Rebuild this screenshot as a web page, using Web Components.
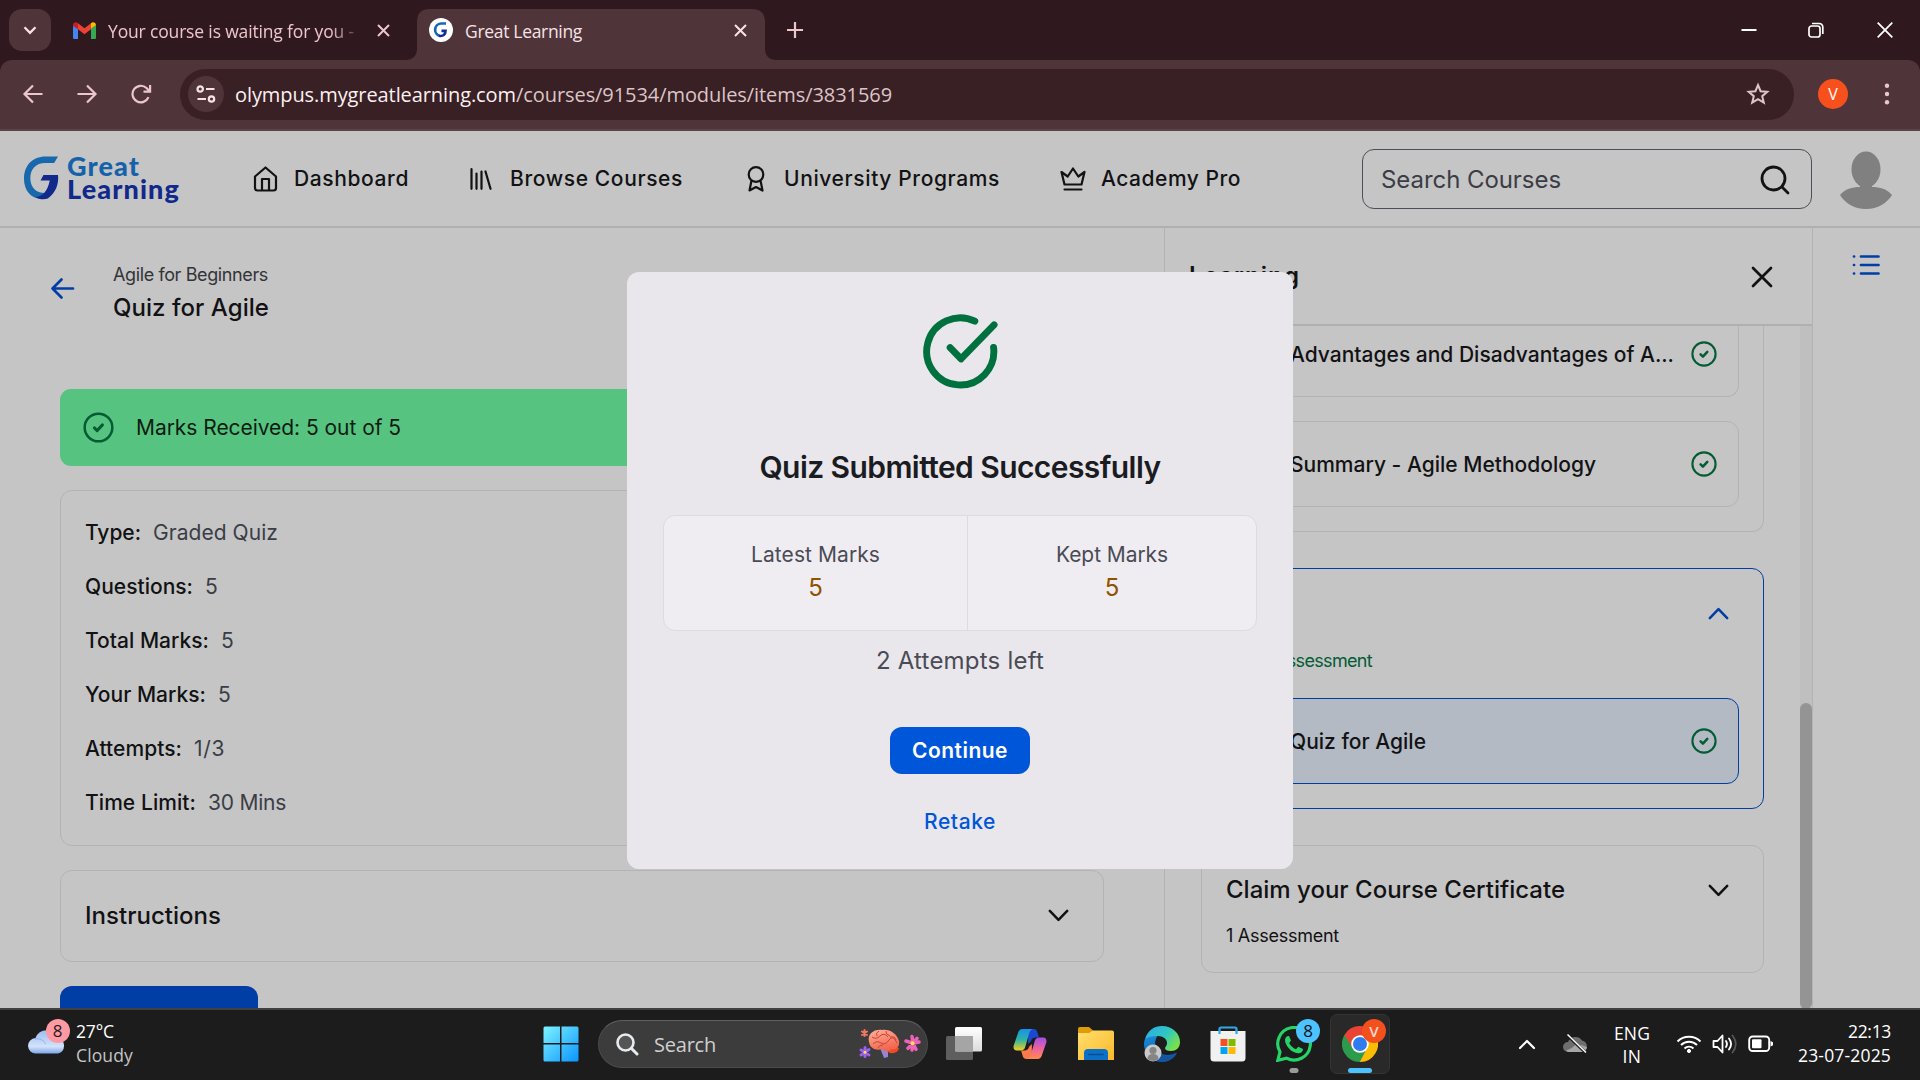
<!DOCTYPE html>
<html lang="en">
<head>
<meta charset="utf-8">
<title>Great Learning</title>
<style>
html,body{margin:0;padding:0}
body{width:1920px;height:1080px;overflow:hidden;display:flex;flex-direction:column;background:#c5c5c5;font-family:Inter,"Liberation Sans",sans-serif;color:#121214}
</style>
</head>
<body>
<browser-chrome></browser-chrome>
<course-page></course-page>
<task-bar></task-bar>
<script>
const define = (name, css, html, after) => {
  const tpl = document.createElement('template');
  tpl.innerHTML = `<style>*{box-sizing:border-box}svg{display:block;flex:none}${css}</style>${html}`;
  customElements.define(name, class extends HTMLElement {
    constructor(){ super(); this.attachShadow({mode:'open'}).append(tpl.content.cloneNode(true)); }
    connectedCallback(){ if (after) after(this, this.shadowRoot); }
  });
};

/* Text set to an exact advance width: the rest is spread over the letters. */
define('fit-text', `:host{display:inline-block;flex:none;white-space:nowrap}span{display:inline-block}`, `<span><slot></slot></span>`, (el, root) => {
  const w = +el.getAttribute('w'), s = root.querySelector('span');
  const n = el.textContent.length;
  s.style.letterSpacing = '0px';
  const nat = s.getBoundingClientRect().width;
  s.style.letterSpacing = ((w - nat) / n).toFixed(3) + 'px';
  el.style.width = w + 'px';
});

define('check-badge', `:host{display:block;flex:none;width:var(--s,26px);height:var(--s,26px);color:#045c35}svg{width:100%;height:100%}`,
`<svg viewBox="0 0 26 26" fill="none" stroke="currentColor" stroke-width="2.1" stroke-linecap="round" stroke-linejoin="round"><circle cx="13" cy="13" r="11.6"/><path d="M9.600 13.300l2.300 2.300 4.400-4.800" stroke-width="2.500"/></svg>`);

define('chevron-icon', `:host{display:block;flex:none;width:21px;height:13px}:host([up]){transform:scaleY(-1)}`,
`<svg width="21" height="13" viewBox="0 0 21 13" fill="none" stroke="currentColor" stroke-width="2.5" stroke-linecap="round" stroke-linejoin="round"><path d="M1.800 1.800l8.700 9 8.700-9"/></svg>`);

define('browser-chrome', `
:host{display:block;flex:none;height:131px;background:#2f181e;font-family:"Open Sans","Noto Sans",sans-serif;color:#ecc6cd}
.tabs{height:60px;display:flex;align-items:center;font-size:17.5px}
.drop{width:42px;height:42px;border-radius:13px;background:#4f3439;margin-left:9px;display:grid;place-items:center}
.t1{display:flex;align-items:center;width:354px;padding-left:22px}
.t1 fit-text{margin-left:12px;padding-top:2px;-webkit-mask-image:linear-gradient(90deg,#000 90%,transparent 104%)}
.t1 .x{margin-left:23px}
.act{width:372px;height:51px;align-self:flex-end;display:grid;color:#f7e3e6}
.act>*{grid-area:1/1}
.act .row{display:flex;align-items:center;padding:0 30px 9px 24px;}
.act fit-text{margin-left:12px;padding-top:2px}.act .x{margin-left:auto}
.plus{margin-left:10px}
.win{margin-left:auto;display:flex;align-items:center;padding-right:27px;color:#fff;height:58px}
.bar{height:71px;background:#4f3439;border-bottom:2px solid #5b4447;border-radius:12px 12px 0 0;display:flex;align-items:center;padding:0 0 1px 22px;}
.omni{margin-left:26px;width:1614px;height:51px;border-radius:26px;background:#382024;display:flex;align-items:center;padding:0 24px 0 8px;font-size:20px;color:#ddc4c7}
.info{width:36px;height:36px;border-radius:50%;background:#4f3439;display:grid;place-items:center;margin-right:11px}
.omni b{font-weight:400;color:#fdf0f1}
.omni svg.star{margin-left:auto}
.av{width:30px;height:30px;border-radius:50%;background:#f8501d;color:#fff;font-size:16px;display:grid;place-items:center;margin-left:24px}
.dots{margin-left:36px}
`, `
<div class="tabs">
 <div class="drop"><svg width="14" height="9" viewBox="0 0 14 9" fill="none" stroke="#f7e3e6" stroke-width="2.3"><path d="M1.5 1.3L7 6.8l5.5-5.500"/></svg></div>
 <div class="t1">
  <svg width="23" height="17" viewBox="0 0 23 17"><path d="M0 3v13a1 1 0 001 1h4V6z" fill="#4285f4"/><path d="M23 3v13a1 1 0 01-1 1h-4V6z" fill="#34a853"/><path d="M18 1l-.5 5.800L23 3.200C23 .4 20.100-.8 18 1z" fill="#fbbc04"/><path d="M5 1.300l6.500 5L18 1.300v6l-6.500 5L5 7.300z" fill="#ea4335"/><path d="M0 3.200C0 .4 2.900-.8 5 1.300v6L0 4z" fill="#c5221f"/></svg>
  <fit-text w="246">Your course is waiting for you -</fit-text>
  <svg class="x" width="13" height="13" viewBox="0 0 13 13" stroke="currentColor" stroke-width="2"><path d="M1 1l11 11M12 1L1 12"/></svg>
 </div>
 <div class="act">
  <svg width="372" height="51"><path d="M0 51Q12 51 12 39V13Q12 0 25 0H347Q360 0 360 13V39Q360 51 372 51Z" fill="#4f3439"/></svg>
  <div class="row">
   <svg width="24" height="24" viewBox="0 0 24 24"><circle cx="12" cy="12" r="12" fill="#fff"/><path d="M17 5.500h-4.500a6.300 6.300 0 00-2 12.300" fill="none" stroke="#1766b4" stroke-width="2.700"/><path d="M10 17.800c4.500 1 6.500-1.800 6.500-5h-4" fill="none" stroke="#102f96" stroke-width="2.700"/></svg>
   <fit-text w="117">Great Learning</fit-text>
   <svg class="x" width="13" height="13" viewBox="0 0 13 13" stroke="currentColor" stroke-width="2"><path d="M1 1l11 11M12 1L1 12"/></svg>
  </div>
 </div>
 <svg class="plus" width="16" height="16" viewBox="0 0 16 16" stroke="currentColor" stroke-width="2.200"><path d="M8 0v16M0 8h16"/></svg>
 <div class="win">
  <svg width="16" height="16" viewBox="0 0 16 16" stroke="#fff" stroke-width="2"><path d="M0.500 8h15"/></svg>
  <svg style="margin-left:51px" width="16" height="16" viewBox="0 0 16 16" fill="none" stroke="#fff" stroke-width="1.700"><rect x="1" y="4" width="11" height="11" rx="2.500"/><path d="M4 1.500h7A3.600 3.600 0 0114.800 5v7"/></svg>
  <svg style="margin-left:53px" width="16" height="16" viewBox="0 0 16 16" stroke="#fff" stroke-width="1.800"><path d="M.7.700l14.600 14.600M15.300.7L.7 15.300"/></svg>
 </div>
</div>
<div class="bar">
 <svg width="132" height="20" viewBox="0 0 132 20" fill="none" stroke="#ecc6cd" stroke-width="2.200"><path d="M20.500 10H2.500M11 1.500L2.500 10l8.500 8.500"/><path d="M55.500 10h18M65 1.500L73.500 10l-8.500 8.500"/><path d="M126.500 13.200A8.300 8.300 0 11124.500 4l3 3M128.100 1v6.600H121.500"/></svg>
 <div class="omni">
  <div class="info"><svg width="20" height="18" viewBox="0 0 20 18" fill="none" stroke="#f7e3e6" stroke-width="2.200"><circle cx="4.200" cy="4" r="2.700"/><path d="M10 4h8.500M1.500 14H10"/><circle cx="15.500" cy="14" r="2.700"/></svg></div>
  <b><fit-text w="281">olympus.mygreatlearning.com</fit-text></b><fit-text w="376">/courses/91534/modules/items/3831569</fit-text>
  <svg class="star" width="24" height="24" viewBox="0 0 24 24" fill="none" stroke="#dcc5c8" stroke-width="2"><path d="M12 3l2.600 6.200 6.700.6-5.100 4.400 1.600 6.500L12 17.200l-5.800 3.500 1.600-6.500-5.100-4.400 6.700-.6z"/></svg>
 </div>
 <div class="av">V</div>
 <svg class="dots" width="6" height="22" viewBox="0 0 6 22" fill="#ecc6cd"><circle cx="3" cy="2.700" r="2.200"/><circle cx="3" cy="11" r="2.200"/><circle cx="3" cy="19.300" r="2.200"/></svg>
</div>`);

define('site-header', `
:host{display:flex;flex:none;align-items:center;height:97px;border-bottom:2px solid #b0b0b0;padding-left:24px;font-size:21px;font-weight:500}
.logo{display:flex;width:159px;margin-top:3px}
.logo div{font:900 27px/23px Lato,sans-serif;padding:0 0 0 8px;margin-top:-2px;display:flex;flex-direction:column}
.l{color:#10298a;padding-bottom:5px}
.great{color:#1562ab}
.search{width:450px;height:60px;border:1.500px solid #4d4e57;border-radius:12px;display:flex;align-items:center;justify-content:space-between;padding:0 21px 0 18px;font-size:24px;font-weight:400;color:#3b3d46}
.search fit-text{padding-top:2px}.search svg{margin-top:2px}
`, `
<div class="logo">
 <svg width="35" height="44" viewBox="0 0 36 44"><path d="M35 0l-4 6.500h-9C12 6.500 6.500 13 6.500 22c0 7.500 4 13.500 10.500 15l7.500 1-2.500 4.800C9 45.500 0 36 0 23 0 9 9 0 22 0z" fill="#1768ad"/><path d="M20 19h15c1 9-2.500 19-10.500 24-4 1.500-9 1-13-1.500 7-.5 12.500-5 15-17h-9.500z" fill="#10298a"/></svg>
 <div><fit-text class="great" w="73">Great</fit-text><fit-text class="l" w="113">Learning</fit-text></div>
</div>
<svg style="margin-left:70px" width="25" height="26" viewBox="0 0 25 26" fill="none" stroke="#121214" stroke-width="2.200" stroke-linejoin="round"><path d="M2 10.500L12.500 1.500 23 10.500V22a2.500 2.500 0 01-2.500 2.500h-16A2.500 2.500 0 012 22z"/><path d="M9 24.500V13h7v11.500"/></svg>
<fit-text class="nav" style="margin-left:16px" w="115">Dashboard</fit-text>
<svg style="margin-left:61px" width="22" height="22" viewBox="0 0 22 22" stroke="#121214" stroke-width="2.200" stroke-linecap="round"><path d="M1.500 1.200v19.600M6.500 5.500v15.300M11.500 3.500v17.300M15.500 3.500l5 17.300"/></svg>
<fit-text class="nav" style="margin-left:18px" w="173">Browse Courses</fit-text>
<svg style="margin-left:64px" width="18" height="26" viewBox="0 0 18 26" fill="none" stroke="#121214" stroke-width="2.200" stroke-linejoin="round"><circle cx="9" cy="8.500" r="7.300"/><path d="M4.500 14.500L2.500 24.500l6.500-3.500 6.500 3.500-2-10"/></svg>
<fit-text class="nav" style="margin-left:19px" w="216">University Programs</fit-text>
<svg style="margin-left:60px" width="26" height="24" viewBox="0 0 26 24" fill="none" stroke="#121214" stroke-width="2.200" stroke-linejoin="round" stroke-linecap="round"><path d="M4.500 17.500L1.500 5l6.200 4.500L13 1.500l5.300 8L24.500 5l-3 12.500zM4.500 22.500h17"/></svg>
<fit-text class="nav" style="margin-left:15px" w="140">Academy Pro</fit-text>
<div class="search" style="margin-left:121px"><fit-text w="180">Search Courses</fit-text>
 <svg width="30" height="30" viewBox="0 0 30 30" fill="none" stroke="#121214" stroke-width="2.800" stroke-linecap="round"><circle cx="13.500" cy="13.500" r="11.500"/><path d="M22 22l6 6"/></svg></div>
<svg style="margin-left:28px;margin-top:3px" width="52" height="58" viewBox="0 0 52 58" fill="#808080"><ellipse cx="26" cy="18.500" rx="14.500" ry="18"/><path d="M20 32h12v4c8 0 15 2 20 8-5 8-14 14-26 14S5 52 0 44c5-6 12-8 20-8z"/></svg>`);

define('info-row', `:host{display:flex;height:54px;align-items:center;font-size:21px;font-weight:500}::slotted(.v){font-weight:400;color:#3b3d46;margin-left:12px}`, `<slot></slot>`);

define('quiz-main', `
:host{display:block;width:1164px;padding:0 60px;height:782px;overflow:hidden}
.head{display:flex;height:161px;align-items:flex-start}
.head svg{margin:49px 0 0 -10px}
.head div{display:flex;flex-direction:column;margin:33px 0 0 38px;font-size:18px;line-height:28px;color:#333438}
.head .t{font-size:24px;line-height:38px;font-weight:500;color:#121214}
.ok{height:77px;border-radius:11px;background:#57c380;display:flex;align-items:center;padding-left:23px;font-size:21px;color:#0b1c12}
.ok fit-text{margin-left:22px}
.card{border:1.500px solid #b3b3b3;border-radius:12px;width:1044px}
.det{margin-top:24px;height:356px;padding:14px 0 0 24px}
.ins{margin-top:11px;height:92px;display:flex;align-items:center;justify-content:space-between;padding:0 34px 1px 24px;font-size:24px;font-weight:500}
.btn{margin-top:24px;width:198px;height:60px;border-radius:12px;background:#003da5}
`, `
<div class="head"><svg width="25" height="23" viewBox="0 0 25 23" fill="none" stroke="#003da5" stroke-width="2.700" stroke-linecap="round" stroke-linejoin="round"><path d="M23 11.500H2.500M11.500 2.500L2.500 11.500 11.500 20.500"/></svg>
<div><fit-text w="155">Agile for Beginners</fit-text><fit-text class="t" w="156">Quiz for Agile</fit-text></div></div>
<div class="ok"><check-badge style="--s:31px"></check-badge><fit-text w="265">Marks Received: 5 out of 5</fit-text></div>
<div class="card det">
<info-row><fit-text w="56">Type:</fit-text><fit-text class="v" w="125">Graded Quiz</fit-text></info-row>
<info-row><fit-text w="108">Questions:</fit-text><fit-text class="v" w="13">5</fit-text></info-row>
<info-row><fit-text w="124">Total Marks:</fit-text><fit-text class="v" w="13">5</fit-text></info-row>
<info-row><fit-text w="121">Your Marks:</fit-text><fit-text class="v" w="13">5</fit-text></info-row>
<info-row><fit-text w="97">Attempts:</fit-text><fit-text class="v" w="31">1/3</fit-text></info-row>
<info-row><fit-text w="111">Time Limit:</fit-text><fit-text class="v" w="78">30 Mins</fit-text></info-row>
</div>
<div class="card ins" style="margin-top:24px"><fit-text w="136">Instructions</fit-text><chevron-icon></chevron-icon></div>
<div class="btn"></div>`);

define('lesson-item', `:host{display:flex;align-items:center;height:86px;border:1.500px solid #b3b3b3;border-radius:12px;margin:0 24px;padding:0 21.500px 0 63px;font-size:21px;font-weight:500;justify-content:space-between}
:host([active]){background:#b3bac3;border-color:#003da5}:host([cut]){height:71px;border-top:0;border-radius:0 0 12px 12px;padding-bottom:14px}`, `<slot></slot><check-badge></check-badge>`);

define('learning-panel', `
:host{display:flex;flex-direction:column;width:649px;height:782px;border-left:1.500px solid #b3b3b3;border-right:1.500px solid #b3b3b3;overflow:hidden}
.head{flex:none;height:98px;border-bottom:2px solid #b0b0b0;display:flex;align-items:center;justify-content:space-between;padding:2px 39px 0 24px;font-size:24px;font-weight:600}
.head fit-text{margin-bottom:3px}
.body{display:flex;flex:1}
.list{width:635px;padding-left:36px;display:flex;flex-direction:column}
.card{width:563px;border:1.500px solid #b3b3b3;border-radius:12px;flex:none}
.c1{border-top:0;border-radius:0 0 12px 12px;height:206px}
.c1 lesson-item+lesson-item{margin-top:24px}
.c2{margin-top:36px;height:241px;border-color:#003da5;display:flex;flex-direction:column}
.c2 .top{height:129px;padding:0 34px 0 73px;font-size:18px;color:#045c35;display:flex;align-items:flex-start}
.c2 .top fit-text{margin-top:81px}
.c2 chevron-icon{color:#003da5;margin:38px 0 0 auto}
.c3{margin-top:36px;height:128px;padding:25px 34px 0 24px;font-size:24px;font-weight:500;line-height:38px}
.c3 div{display:flex;align-items:center;justify-content:space-between}
.c3 .s{font-size:18px;line-height:26px;font-weight:400;margin-top:14px;display:block}
.track{width:12px;background:#bfbfbf;display:flex;flex-direction:column;justify-content:flex-end;padding-bottom:1px}
.thumb{height:306px;border-radius:6px;background:#949494}
`, `
<div class="head"><fit-text w="111">Learning</fit-text><svg width="22" height="22" viewBox="0 0 22 22" stroke="#121214" stroke-width="2.700" stroke-linecap="round"><path d="M2 2l18 18M20 2L2 20"/></svg></div>
<div class="body"><div class="list">
 <div class="card c1"><lesson-item cut><fit-text w="384">Advantages and Disadvantages of A...</fit-text></lesson-item><lesson-item><fit-text w="306">Summary - Agile Methodology</fit-text></lesson-item></div>
 <div class="card c2"><div class="top"><fit-text w="97">Assessment</fit-text><chevron-icon up></chevron-icon></div><lesson-item active><fit-text w="136">Quiz for Agile</fit-text></lesson-item></div>
 <div class="card c3"><div><fit-text w="339">Claim your Course Certificate</fit-text><chevron-icon></chevron-icon></div><fit-text class="s" w="113">1 Assessment</fit-text></div>
</div><div class="track"><div class="thumb"></div></div></div>`);

define('quiz-dialog', `
:host{width:666px;height:597px;border-radius:12px;background:#e9e7ec;display:flex;flex-direction:column;align-items:center;color:#4a4b55;font-size:21px}
.ico{margin:41px 0 0 1px}
h2{margin:57px 0 0;font-size:30px;line-height:40px;font-weight:600;color:#1b1c22}
.box{margin-top:28px;width:594px;height:116px;border:1.500px solid #dcdbe0;border-radius:12px;background:#f0edf2;display:flex}
.box div{display:flex;flex-direction:column;align-items:center;padding-top:26px;line-height:26px;width:288px}
.box div:first-child{border-right:1.500px solid #dcdbe0;width:304px}
.n{font-size:24px;line-height:40px;color:#8f5300}
.left{font-size:24px;line-height:30px;margin-top:15px}
.go{margin-top:51px;width:140px;height:47px;border-radius:12px;background:#0056d8;color:#fff;font-weight:600;display:grid;place-items:center}
.re{margin-top:35px;line-height:26px;font-weight:500;color:#0056d8}
`, `
<svg class="ico" width="77" height="77" viewBox="0 0 78 78" fill="none" stroke="#00713e" stroke-width="7" stroke-linecap="round" stroke-linejoin="round"><path d="M72.500 34.800A34 34 0 1153.500 8.300"/><path d="M28.500 35L39.500 46.500 73 12"/></svg>
<h2><fit-text w="401">Quiz Submitted Successfully</fit-text></h2>
<div class="box"><div><fit-text w="129">Latest Marks</fit-text><span class="n">5</span></div><div><fit-text w="112">Kept Marks</fit-text><span class="n">5</span></div></div>
<fit-text class="left" w="168">2 Attempts left</fit-text>
<div class="go"><fit-text w="96">Continue</fit-text></div>
<fit-text class="re" w="72">Retake</fit-text>`);

define('course-page', `
:host{display:flex;flex-direction:column;flex:none;height:877px;position:relative;background:#c5c5c5;overflow:hidden}
.row{display:flex;height:780px}
.rail{flex:1;display:flex;justify-content:center;padding:26px 1px 0 0}
.over{position:absolute;inset:0;display:flex;justify-content:center;padding-top:141px}
`, `
<site-header></site-header>
<div class="row"><quiz-main></quiz-main><learning-panel></learning-panel><div class="rail">
<svg width="28" height="22" viewBox="0 0 28 22" stroke="#003da5" stroke-width="2.700" stroke-linecap="round"><path d="M9 2.500h17.500M9 11h17.500M9 19.500h17.500M2 2.500h.1M2 11h.1M2 19.500h.1"/></svg></div></div>
<div class="over"><quiz-dialog></quiz-dialog></div>`);

define('task-bar', `
:host{display:flex;flex:none;height:72px;background:#1c1c1c;border-top:2px solid #404040;font-family:"Open Sans","Noto Sans",sans-serif;font-size:17.500px;color:#fff;align-items:center;line-height:24px;box-sizing:border-box;padding-bottom:2px}
.col{display:flex;flex-direction:column;margin-bottom:2px}
.pill{width:330px;height:48px;margin-left:19px;border-radius:24px;background:#3c3c3c;border:1.500px solid #4b4b4b;border-top-color:#606060;display:flex;align-items:center;padding:0 6px 0 17px;font-size:20px;color:#cfcfcf}
.pill fit-text{margin-left:15px;padding-top:2px}.pill .br{margin-left:auto}
.app{width:60px;height:60px;border-radius:7px;display:grid;place-items:center;margin-left:6px;position:relative}
.app.on{background:#292929;border:1.500px solid #343434}
.badge{position:absolute;width:24px;height:24px;border-radius:50%;display:grid;place-items:center;font-size:17px;line-height:24px;top:5px;left:32px}
.ind{position:absolute;bottom:1px;height:5px;border-radius:3px;left:50%;transform:translateX(-50%)}
.wx{position:relative;margin-left:28px;margin-top:-2px}
.wx .badge{top:-10px;left:17.500px;background:#ff99a4;color:#1c1c1c}
`, `
<div class="wx"><svg width="38" height="28" viewBox="0 0 38 28"><defs><linearGradient id="c" x1="0" y1="0" x2="0" y2="1"><stop offset="0" stop-color="#9dbcf3"/><stop offset=".7" stop-color="#d3e2fa"/><stop offset="1" stop-color="#7ea5ea"/></linearGradient></defs><path d="M8 24.500a7.700 7.700 0 01-.5-15.400A12 12 0 0130 9 8 8 0 0130 24.500z" fill="url(#c)"/><path d="M7 10c5-1 9 1 10.500 5" stroke="#8fb2ef" fill="none"/></svg><div class="badge">8</div></div>
<div class="col" style="margin-left:10px"><fit-text w="38">27°C</fit-text><fit-text w="57" style="color:#c4c4c4">Cloudy</fit-text></div>
<svg style="margin-left:410px" width="36" height="36" viewBox="0 0 36 36"><defs><linearGradient id="w" x1="0" y1="0" x2="1" y2="1"><stop offset="0" stop-color="#7df3ff"/><stop offset="1" stop-color="#0a94ff"/></linearGradient></defs><path d="M2 .500H17V17H.5V2Q.5.500 2 .500zM18.500.500H34Q35.500.500 35.500 2V17H18.500zM.5 18.500H17V35.500H2Q.500 35.500.500 34zM18.500 18.500H35.500V34Q35.500 35.500 34 35.500H18.500z" fill="url(#w)"/></svg>
<div class="pill"><svg width="23" height="23" viewBox="0 0 23 23" fill="#555" stroke="#e6ebf0" stroke-width="2.600" stroke-linecap="round"><circle cx="9.500" cy="9.500" r="8"/><path d="M15.500 15.500l5.500 5.500" stroke-width="3"/></svg>
<fit-text w="62">Search</fit-text>
<svg class="br" width="64" height="32" viewBox="0 0 64 32"><defs><linearGradient id="b" x1="0" y1="0" x2=".4" y2="1"><stop offset="0" stop-color="#ffb09a"/><stop offset="1" stop-color="#f2674e"/></linearGradient></defs>
<path d="M23 20l8 0 0 9-4 1z" fill="#9a83d0"/><path d="M28 22q8-5 14-2-1 6-9 5z" fill="#f04a2a"/><path d="M12 14C10 6 17 1 25 2c8-1 15 4 17 11 1 6-3 9-7 8-4 3-8 2-10 0-5 2-12 0-13-7z" fill="url(#b)"/><path d="M15 9q4 3 8-1t8 1M16 16q4-4 8-1t8-3 8 3M29 3q-1 3 4 5M22 3q-4 2-2 5M33 9q5-1 6 3M21 20q1-3 5-3" fill="none" stroke="#c8453c" stroke-width="1"/>
<g stroke-linecap="round"><path d="M55 8.500l1 6.800 4-5M49 13l7 2.300-5 5M62 14l-6 1.300 3 6M56 15.300L55 22" stroke="#ec63b8" stroke-width="3.500" fill="none"/><circle cx="55.500" cy="15.300" r="2" fill="#ffe14d"/><path d="M8 19.500v9M4 22l8 5M12 21.500l-8 5.500" stroke="#9a62ee" stroke-width="3"/><circle cx="8" cy="24.200" r="1.500" fill="#ffe14d"/><path d="M7.500 2v6M5 3.500l5 3.500M10 3.500L5 7" stroke="#f07862" stroke-width="2"/></g></svg></div>
<div class="app"><svg width="36" height="36" viewBox="0 0 36 36"><defs><linearGradient id="t" x1="0" y1="0" x2="0" y2="1"><stop offset="0" stop-color="#fff"/><stop offset="1" stop-color="#dcdcdc"/></linearGradient></defs><rect y="10" width="27" height="24" rx="1.500" fill="#5e5e5e"/><rect x="9" y="1" width="27" height="24.500" rx="1.500" fill="url(#t)"/><path d="M9 10h18v15.500H10.500q-1.500 0-1.500-1.500z" fill="#a5a5a5"/></svg></div>
<div class="app"><svg width="34" height="32" viewBox="0 0 36 34"><defs><linearGradient id="p" x1="0" y1="0" x2="0" y2="1"><stop offset="0" stop-color="#1590f0"/><stop offset=".5" stop-color="#2eb5a0"/><stop offset="1" stop-color="#f5d020"/></linearGradient><linearGradient id="q" x1="0" y1="0" x2="0" y2="1"><stop offset="0" stop-color="#a14fe8"/><stop offset=".55" stop-color="#f0649a"/><stop offset="1" stop-color="#ff8a4a"/></linearGradient></defs><path d="M16 1h6q3 0 4 4l1.500 5H24q-4 0-5 4l-3 3z" fill="#1b48d0"/><path d="M20 33h-6q-3 0-4-4l-1.500-5H12q4 0 5-4l3-3z" fill="#fb7a4c"/><path d="M10 1h11q-3 1-4 5l-4 14q-1 4-5 4H4q-4 0-3.500-5L5 6q1-5 5-5z" fill="url(#p)"/><path d="M26 33H15q3-1 4-5l4-14q1-4 5-4h4q4 0 3.500 5L31 28q-1 5-5 5z" fill="url(#q)"/></svg></div>
<div class="app"><svg width="36" height="34" viewBox="0 0 36 34"><defs><linearGradient id="f" x1="0" y1="0" x2="1" y2="1"><stop offset="0" stop-color="#ffdf70"/><stop offset="1" stop-color="#fbb928"/></linearGradient></defs><path d="M0 2Q0 0 2 0H11l4 3.500V8H0z" fill="#e09c08"/><path d="M0 6H11l4-2.500H34q2 0 2 2V33H0z" fill="url(#f)"/><path d="M6 33V26q0-4 4-4H26q4 0 4 4v7z" fill="#0b70c6"/><path d="M11 27.500h14" stroke="#0a4d95" stroke-width="1.600" stroke-linecap="round"/></svg></div>
<div class="app"><svg width="36" height="36" viewBox="0 0 36 36"><defs><linearGradient id="e" x1="0" y1="0" x2="1" y2=".6"><stop offset="0" stop-color="#2fa9e8"/><stop offset=".6" stop-color="#2ec8c0"/><stop offset="1" stop-color="#7ae04a"/></linearGradient><linearGradient id="e2" x1="0" y1="0" x2=".5" y2="1"><stop offset="0" stop-color="#1a8fdc"/><stop offset="1" stop-color="#0d58ac"/></linearGradient></defs><path d="M1 13C4 9 8 8 14 9c-2 3-3 6-3 9 0 7 6 11 12 11 4 0 7-1 10-2.500C30 32 24 36 18 36 8 36 0 28 0 18q0-3 1-5z" fill="url(#e2)"/><path d="M1 13C4 4 10 0 18 0c10 0 18 7 18 16 0 6-4 9-9 9-4 0-6-1-6-3 0-1 2-2 2-5 0-4-4-7-9-7-6 0-10 1-13 3z" fill="url(#e)"/><path d="M12 17c-1 9 6 13 12 13 4 0 7-1 9-3-3 6-9 9-15 9C11 36 7 27 12 17z" fill="#1455a0"/><circle cx="9" cy="27" r="8.500" fill="#c9c9c9"/><circle cx="9" cy="24.500" r="3.600" fill="#858585"/><path d="M3.500 33q0-5 5.500-5t5.500 5q-5 4-11 0z" fill="#858585"/></svg></div>
<div class="app"><svg width="36" height="36" viewBox="0 0 36 36"><path d="M.5 5h35v27q0 3.500-3.500 3.500H4Q.500 35.500.500 32z" fill="#f1f1f1"/><path d="M9.500 8V3q0-1.500 1.500-1.500h14q1.500 0 1.500 1.500v5" fill="none" stroke="#32a8e8" stroke-width="2.200"/><path d="M10.500 13h7v7h-7z" fill="#f25022"/><path d="M18.500 13h7v7h-7z" fill="#7fba00"/><path d="M10.500 21h7v7h-7z" fill="#00a4ef"/><path d="M18.500 21h7v7h-7z" fill="#ffb900"/></svg></div>
<div class="app"><svg width="36" height="36" viewBox="0 0 36 36"><path d="M1.800 34.300L4 26A16.300 16.300 0 1110.500 32.200z" fill="none" stroke="#25d366" stroke-width="3.200"/><path d="M13 10l2 4.500-1.800 2.400c1.600 3.200 3.800 5 6.800 6.300l2.300-2.500 4.700 2.200c0 3-2.700 4.500-5 4.300C15.500 27 9 19.500 9 14c0-2.500 2-4.500 4-4z" fill="#25d366"/></svg><div class="badge" style="background:#4cc2ff;color:#111">8</div><div class="ind" style="width:9px;background:#9a9a9a"></div></div>
<div class="app on"><svg width="36" height="36" viewBox="-18 -18 36 36"><path d="M0 0L-15.600-9A18 18 0 0115.600-9z" fill="#ea4335"/><path d="M0 0L15.600-9A18 18 0 010 18z" fill="#fbbc04"/><path d="M0 0L0 18A18 18 0 01-15.600-9z" fill="#2c9b4b"/><path d="M0-8.500H15.600L8 5z" fill="#fbbc04"/><path d="M-15.600-9L-7.400 4.500 0-8.500z" fill="#ea4335"/><path d="M-15.600-9L-7.400 4.500 7 4.500 0 18-12 13z" fill="#2c9b4b"/><path d="M7 4.500L0 18 12 13 16 2z" fill="#fbbc04"/><circle r="8.800" fill="#fff"/><circle r="7" fill="#2f7cf0"/></svg><div class="badge" style="background:#f4501e;color:#fbd9ce;font-size:15px;font-weight:600;top:4px;left:31px">V</div><div class="ind" style="width:24px;background:#4cc2ff;bottom:0"></div></div>
<svg style="margin-left:128px" width="18" height="11" viewBox="0 0 18 11" fill="none" stroke="#fff" stroke-width="2.200" stroke-linecap="round" stroke-linejoin="round"><path d="M2 9l7-7 7 7"/></svg>
<svg style="margin-left:27px" width="25" height="20" viewBox="0 0 25 20"><path d="M5 18a5 5 0 010-10A8 8 0 0119 6.500a6 6 0 011 11.500z" fill="#6e6e6e"/><path d="M3 16.500Q10 14 13 10q6 1 11 3-1 5-5 5H5z" fill="#a6a6a6"/><path d="M4 1l19 18" stroke="#1c1c1c" stroke-width="3"/><path d="M4.500.500l18.500 18" stroke="#fff" stroke-width="1.500"/></svg>
<div class="col" style="margin:1px 0 0 26px;align-items:center;line-height:22.500px"><fit-text w="36">ENG</fit-text><fit-text w="19">IN</fit-text></div>
<svg style="margin-left:26px" width="26" height="20" viewBox="0 0 26 20" fill="none" stroke="#fff" stroke-width="1.900"><path d="M1.500 7.500a16.300 16.300 0 0123 0M5 11a11.300 11.300 0 0116 0M8.500 14.500a6.400 6.400 0 019 0"/><circle cx="13" cy="17" r="1.600" fill="#fff" stroke-width="1"/></svg>
<svg style="margin-left:10px" width="26" height="20" viewBox="0 0 26 20" fill="none" stroke="#fff" stroke-width="1.800" stroke-linecap="round" stroke-linejoin="round"><path d="M1.500 7h4l5-5.500v17l-5-5.500h-4zM14 7q2 3 0 6M17 4.500q4.200 5.500 0 11"/><path d="M20.500 1.500q6.500 8.500 0 17" stroke="#555"/></svg>
<svg style="margin-left:10px" width="26" height="18" viewBox="0 0 26 18"><rect x="1.200" y="1.500" width="20" height="14.500" rx="3.500" fill="none" stroke="#fff" stroke-width="1.900"/><rect x="4" y="4.300" width="9.500" height="9" rx="1" fill="#fff"/><path d="M22.500 6l2.500 1.200v3l-2.500 1.200z" fill="#fff"/></svg>
<div class="col" style="margin-left:auto;margin-right:29px;align-items:flex-end"><fit-text w="43">22:13</fit-text><fit-text w="93">23-07-2025</fit-text></div>`);
</script>
</body>
</html>
